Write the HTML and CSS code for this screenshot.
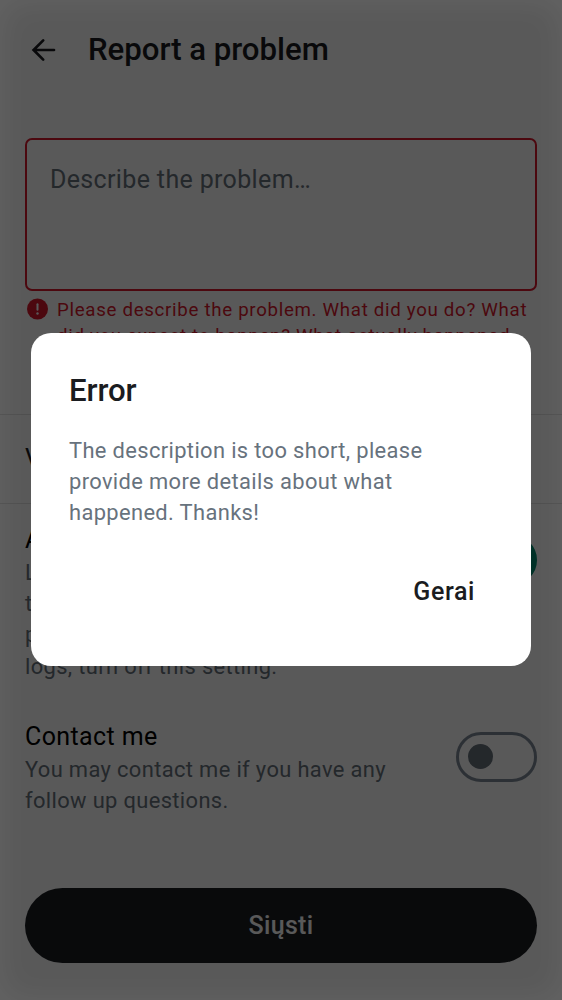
FILE: index.html
```html
<!DOCTYPE html>
<html lang="lt">
<head>
<meta charset="utf-8">
<title>Report a problem</title>
<link rel="stylesheet" href="styles.css">
</head>
<body>
<main class="screen">
  <header class="bar">
    <svg class="back" viewBox="0 0 26 24" width="26" height="24"><path d="M13.2 2.4 3.6 12l9.6 9.6M3.8 12H24" fill="none" stroke="currentColor" stroke-width="2.7" stroke-linecap="round"/></svg>
    <h1 class="title">Report a problem</h1>
  </header>
  <div class="field">Describe the problem…</div>
  <div class="error">
    <svg class="error-icon" viewBox="0 0 22 22" width="22" height="22"><circle cx="11.5" cy="11" r="10.5" fill="currentColor"/><path d="M11.5 6.2v5.6" stroke="#fff" stroke-width="2" stroke-linecap="round"/><circle cx="11.5" cy="15.5" r="1.2" fill="#fff"/></svg>
    <p class="error-text">Please describe the problem. What did you do? What<br>did you expect to happen? What actually happened</p>
  </div>
  <div class="link-row">V</div>
  <section class="setting attach">
    <div class="copy">
      <h2 class="label">Attach logs</h2>
      <p class="hint">Logs help us understand what<br>the app did just before the<br>problem. If you prefer not to send<br>logs, turn off this setting.</p>
    </div>
    <span class="switch on"></span>
  </section>
  <section class="setting contact">
    <div class="copy">
      <h2 class="label">Contact me</h2>
      <p class="hint">You may contact me if you have any<br>follow up questions.</p>
    </div>
    <span class="switch"></span>
  </section>
  <button class="submit">Siųsti</button>
</main>
<div class="scrim">
  <div class="dialog">
    <h2 class="dialog-title">Error</h2>
    <p class="dialog-text">The description is too short, please<br>provide more details about what<br>happened. Thanks!</p>
    <button class="confirm">Gerai</button>
  </div>
</div>
</body>
</html>
```
FILE: styles.css
```css
* { box-sizing: border-box; margin: 0; padding: 0; }
body { width: 562px; height: 1000px; overflow: hidden; background: #fff; font-family: Roboto, "Noto Sans", sans-serif; color: #1a1c20; }
button { border: 0; background: none; font: inherit; color: inherit; }
.screen { display: flex; flex-direction: column; height: 1000px; }
.bar { display: flex; align-items: center; height: 100px; padding-left: 30px; }
.back { flex: none; margin-right: 32px; }
.title { font-size: 31.2px; font-weight: 500; line-height: 40px; letter-spacing: -.03px; }
.field { flex: none; height: 153px; margin: 37.5px 25px 0; padding: 24.5px 23px; border: 2px solid #d9182d; border-radius: 7px; color: #67727d; font-size: 25px; line-height: 32px; letter-spacing: .35px; }
.error { flex: none; display: flex; height: 123.5px; padding: 6px 0 0 26px; color: #d9182d; }
.error-icon { flex: none; margin: 1.5px 9px 0 0; }
.error-text { font-size: 18.7px; line-height: 26px; letter-spacing: .69px; white-space: nowrap; }
.link-row { flex: none; height: 90px; padding: 27px 25px; border: solid #e2e2e2; border-width: 1px 0; font-size: 25px; line-height: 34px; }
.setting { flex: none; display: flex; justify-content: space-between; padding: 0 25px; }
.attach { height: 197px; padding-top: 19px; }
.contact { height: 187px; padding-top: 19px; }
.label { font-size: 25px; font-weight: 400; line-height: 34px; letter-spacing: .4px; color: #000; }
.hint { font-size: 21.9px; line-height: 31.2px; letter-spacing: .36px; color: #67727d; white-space: nowrap; }
.switch { flex: none; width: 81px; height: 50px; margin-top: 12px; padding: 9px; border: 3px solid #7f8b97; border-radius: 25px; }
.switch::before { content: ""; display: block; width: 25px; height: 25px; border-radius: 50%; background: #67727d; }
.on { background: #008c70; border-color: #008c70; }
.on::before { background: #fff; margin-left: 31px; }
.submit { flex: none; height: 75px; margin: 0 25px; border-radius: 38px; background: #1a1d22; color: #fff; font-size: 25px; font-weight: 500; letter-spacing: .3px; }
.scrim { position: absolute; inset: 0; display: flex; align-items: center; justify-content: center; padding-bottom: 1px; background: rgba(0, 0, 0, .65); box-shadow: inset 0 0 35px rgba(255, 255, 255, .07); }
.dialog { display: flex; flex-direction: column; width: 500px; height: 333px; padding: 38px 38px 37px; border-radius: 20px; background: #fff; }
.dialog-title { font-size: 31.2px; font-weight: 500; line-height: 40px; letter-spacing: -.1px; }
.dialog-text { margin-top: 24px; font-size: 21.9px; line-height: 31.2px; letter-spacing: .36px; color: #67727d; white-space: nowrap; }
.confirm { align-self: flex-end; margin: 46px 18px 0 0; font-size: 25px; font-weight: 500; line-height: 34px; letter-spacing: .6px; }
```
